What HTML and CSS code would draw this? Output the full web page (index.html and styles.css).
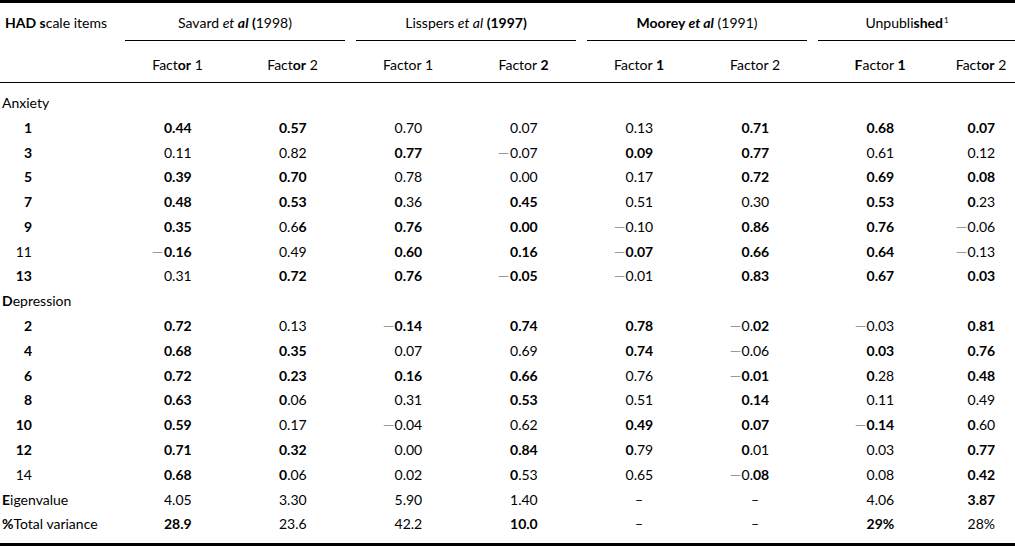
FILE: index.html
```html
<!DOCTYPE html>
<html lang="en">
<head>
<meta charset="utf-8">
<title>HAD scale factor loadings</title>
<link rel="stylesheet" href="styles.css">
</head>
<body>
<table class="had">
  <colgroup>
    <col class="c-lab">
    <col class="c-115"><col class="c-115">
    <col class="c-116"><col class="c-115">
    <col class="c-116"><col class="c-116">
    <col class="c-134"><col class="c-68">
  </colgroup>
  <thead>
    <tr class="hrow1">
      <th class="lab-head"><b>HAD s</b>cale items</th>
      <th colspan="2" class="grp g1"><div class="gl">Savard <i>et</i> <b><i>al</i> (</b>1998)</div></th>
      <th colspan="2" class="grp g2"><div class="gl">Lisspers <i>et al</i> <b>(1997)</b></div></th>
      <th colspan="2" class="grp g3"><div class="gl"><b>Moorey <i>et al</i></b> (1991)</div></th>
      <th colspan="2" class="grp g4"><div class="gl gl-last">Unpubli<b>shed</b><span class="sup">1</span></div></th>
    </tr>
    <tr class="hrow2">
      <th></th>
      <th>Fact<b>or</b> 1</th>
      <th>Fact<b>or</b> 2</th>
      <th>Factor 1</th>
      <th>Factor <b>2</b></th>
      <th>Factor <b>1</b></th>
      <th>Factor 2</th>
      <th><b>F</b>actor <b>1</b></th>
      <th>Fact<b>or</b> 2</th>
    </tr>
  </thead>
  <tbody>
    <tr class="first">
      <td class="sec">Anxiety</td><td colspan="8"></td>
    </tr>
    <tr>
      <td class="item"><span class="num"><b>1</b></span></td>
      <td><span class="v"><b>0.44</b></span></td>
      <td><span class="v"><b>0.57</b></span></td>
      <td><span class="v">0.70</span></td>
      <td><span class="v">0.07</span></td>
      <td><span class="v">0.13</span></td>
      <td><span class="v"><b>0.71</b></span></td>
      <td><span class="v"><b>0.68</b></span></td>
      <td><span class="v"><b>0.07</b></span></td>
    </tr>
    <tr>
      <td class="item"><span class="num"><b>3</b></span></td>
      <td><span class="v">0.11</span></td>
      <td><span class="v">0.82</span></td>
      <td><span class="v"><b>0.77</b></span></td>
      <td><span class="v"><span class="m">−</span>0.07</span></td>
      <td><span class="v"><b>0.09</b></span></td>
      <td><span class="v"><b>0.77</b></span></td>
      <td><span class="v">0.61</span></td>
      <td><span class="v">0.12</span></td>
    </tr>
    <tr>
      <td class="item"><span class="num"><b>5</b></span></td>
      <td><span class="v"><b>0.39</b></span></td>
      <td><span class="v"><b>0.70</b></span></td>
      <td><span class="v">0.78</span></td>
      <td><span class="v">0.00</span></td>
      <td><span class="v">0.17</span></td>
      <td><span class="v"><b>0.72</b></span></td>
      <td><span class="v"><b>0.69</b></span></td>
      <td><span class="v"><b>0.08</b></span></td>
    </tr>
    <tr>
      <td class="item"><span class="num"><b>7</b></span></td>
      <td><span class="v"><b>0.48</b></span></td>
      <td><span class="v"><b>0.53</b></span></td>
      <td><span class="v"><b>0</b>.36</span></td>
      <td><span class="v"><b>0.45</b></span></td>
      <td><span class="v">0.51</span></td>
      <td><span class="v">0.30</span></td>
      <td><span class="v"><b>0.53</b></span></td>
      <td><span class="v"><b>0</b>.23</span></td>
    </tr>
    <tr>
      <td class="item"><span class="num"><b>9</b></span></td>
      <td><span class="v"><b>0.35</b></span></td>
      <td><span class="v">0.6<b>6</b></span></td>
      <td><span class="v"><b>0.76</b></span></td>
      <td><span class="v"><b>0.00</b></span></td>
      <td><span class="v"><span class="m">−</span>0.10</span></td>
      <td><span class="v"><b>0.86</b></span></td>
      <td><span class="v"><b>0.76</b></span></td>
      <td><span class="v"><span class="m">−</span>0.06</span></td>
    </tr>
    <tr>
      <td class="item"><span class="num">11</span></td>
      <td><span class="v"><span class="m">−</span><b>0.16</b></span></td>
      <td><span class="v">0.49</span></td>
      <td><span class="v"><b>0.60</b></span></td>
      <td><span class="v"><b>0.16</b></span></td>
      <td><span class="v"><span class="m">−</span><b>0.07</b></span></td>
      <td><span class="v"><b>0.66</b></span></td>
      <td><span class="v"><b>0.64</b></span></td>
      <td><span class="v"><span class="m">−</span>0.13</span></td>
    </tr>
    <tr>
      <td class="item"><span class="num"><b>13</b></span></td>
      <td><span class="v">0.31</span></td>
      <td><span class="v"><b>0.72</b></span></td>
      <td><span class="v"><b>0.76</b></span></td>
      <td><span class="v"><span class="m">−</span><b>0.05</b></span></td>
      <td><span class="v"><span class="m">−</span>0.01</span></td>
      <td><span class="v"><b>0.83</b></span></td>
      <td><span class="v"><b>0.67</b></span></td>
      <td><span class="v"><b>0.03</b></span></td>
    </tr>
    <tr>
      <td class="sec"><b>D</b>epression</td><td colspan="8"></td>
    </tr>
    <tr>
      <td class="item"><span class="num"><b>2</b></span></td>
      <td><span class="v"><b>0.72</b></span></td>
      <td><span class="v">0.13</span></td>
      <td><span class="v"><span class="m">−</span><b>0.14</b></span></td>
      <td><span class="v"><b>0.74</b></span></td>
      <td><span class="v"><b>0.78</b></span></td>
      <td><span class="v"><span class="m">−</span>0.<b>02</b></span></td>
      <td><span class="v"><span class="m">−</span>0.03</span></td>
      <td><span class="v"><b>0.81</b></span></td>
    </tr>
    <tr>
      <td class="item"><span class="num"><b>4</b></span></td>
      <td><span class="v"><b>0.68</b></span></td>
      <td><span class="v"><b>0.35</b></span></td>
      <td><span class="v">0.07</span></td>
      <td><span class="v">0.69</span></td>
      <td><span class="v"><b>0.74</b></span></td>
      <td><span class="v"><span class="m">−</span>0.06</span></td>
      <td><span class="v"><b>0.03</b></span></td>
      <td><span class="v"><b>0.76</b></span></td>
    </tr>
    <tr>
      <td class="item"><span class="num"><b>6</b></span></td>
      <td><span class="v"><b>0.72</b></span></td>
      <td><span class="v"><b>0.23</b></span></td>
      <td><span class="v"><b>0.16</b></span></td>
      <td><span class="v"><b>0.66</b></span></td>
      <td><span class="v">0.76</span></td>
      <td><span class="v"><span class="m">−</span><b>0.01</b></span></td>
      <td><span class="v"><b>0</b>.28</span></td>
      <td><span class="v"><b>0.48</b></span></td>
    </tr>
    <tr>
      <td class="item"><span class="num"><b>8</b></span></td>
      <td><span class="v"><b>0.63</b></span></td>
      <td><span class="v"><b>0</b>.06</span></td>
      <td><span class="v">0.31</span></td>
      <td><span class="v"><b>0.53</b></span></td>
      <td><span class="v">0.51</span></td>
      <td><span class="v"><b>0.14</b></span></td>
      <td><span class="v">0.11</span></td>
      <td><span class="v">0.49</span></td>
    </tr>
    <tr>
      <td class="item"><span class="num"><b>10</b></span></td>
      <td><span class="v"><b>0.59</b></span></td>
      <td><span class="v">0.17</span></td>
      <td><span class="v"><span class="m">−</span>0.04</span></td>
      <td><span class="v">0.62</span></td>
      <td><span class="v"><b>0.49</b></span></td>
      <td><span class="v"><b>0.07</b></span></td>
      <td><span class="v"><span class="m">−</span><b>0.14</b></span></td>
      <td><span class="v"><b>0</b>.60</span></td>
    </tr>
    <tr>
      <td class="item"><span class="num"><b>12</b></span></td>
      <td><span class="v"><b>0.71</b></span></td>
      <td><span class="v"><b>0.32</b></span></td>
      <td><span class="v">0.00</span></td>
      <td><span class="v"><b>0.84</b></span></td>
      <td><span class="v"><b>0</b>.79</span></td>
      <td><span class="v"><b>0</b>.01</span></td>
      <td><span class="v">0.03</span></td>
      <td><span class="v"><b>0.77</b></span></td>
    </tr>
    <tr>
      <td class="item"><span class="num">14</span></td>
      <td><span class="v"><b>0.68</b></span></td>
      <td><span class="v"><b>0</b>.06</span></td>
      <td><span class="v">0.02</span></td>
      <td><span class="v"><b>0</b>.53</span></td>
      <td><span class="v">0.65</span></td>
      <td><span class="v"><span class="m">−</span>0.<b>08</b></span></td>
      <td><span class="v">0.08</span></td>
      <td><span class="v"><b>0.42</b></span></td>
    </tr>
    <tr>
      <td class="sec"><b>E</b>igenvalue</td>
      <td><span class="v">4.05</span></td>
      <td><span class="v">3.30</span></td>
      <td><span class="v">5.90</span></td>
      <td><span class="v">1.40</span></td>
      <td class="dash">–</td>
      <td class="dash">–</td>
      <td><span class="v">4.06</span></td>
      <td><span class="v"><b>3.87</b></span></td>
    </tr>
    <tr class="last">
      <td class="sec"><b>%</b>Total variance</td>
      <td><span class="v"><b>28.9</b></span></td>
      <td><span class="v">23.6</span></td>
      <td><span class="v">42.2</span></td>
      <td><span class="v"><b>10.0</b></span></td>
      <td class="dash">–</td>
      <td class="dash">–</td>
      <td><span class="v"><b>29%</b></span></td>
      <td><span class="v">28%</span></td>
    </tr>
  </tbody>
</table>
</body>
</html>
```
FILE: styles.css
```css
html, body {
  margin: 0;
  padding: 0;
  background: #fff;
}
body {
  width: 1015px;
  height: 546px;
  overflow: hidden;
  font-family: Lato, "Open Sans", "Liberation Sans", sans-serif;
  font-size: 14px;
  color: #000;
}
.had {
  width: 1015px;
  table-layout: fixed;
  border-collapse: separate;
  border-spacing: 0;
  border-top: 3px solid #000;
  border-bottom: 3px solid #000;
}
.c-lab { width: 120px; }
.c-115 { width: 115px; }
.c-116 { width: 116px; }
.c-134 { width: 134px; }
.c-68 { width: 68px; }

.had th, .had td {
  padding: 0;
  line-height: 17px;
  font-weight: 400;
  white-space: nowrap;
}
.had b { font-weight: 700; }

/* header row 1 */
.had th.lab-head {
  text-align: left;
  vertical-align: top;
  padding: 11px 0 0 5px;
}
.grp { vertical-align: top; }
.gl {
  padding: 11px 0 9px;
  border-bottom: 1px solid #000;
  text-align: center;
}
.had th.g1 { padding: 0 5px; }
.had th.g2 { padding: 0 5px 0 6px; }
.had th.g3 { padding: 0 6px; }
.had th.g4 { padding: 0 0 0 5px; }
.gl-last { padding-right: 19px; }
.sup {
  font-size: 8px;
  vertical-align: 5px;
  line-height: 0;
  margin-left: 1px;
}

/* header row 2 */
.had .hrow2 th {
  padding: 15px 0 9px;
  border-bottom: 1px solid #000;
  text-align: center;
}

/* body */
.had tbody td {
  padding: 3.9px 0;
  text-align: center;
}
.had tbody tr.first td { padding-top: 11px; }
.had tbody tr.last td { padding-bottom: 10.4px; }
.had tbody td.sec {
  text-align: left;
  padding-left: 2px;
}
.had tbody td.item { text-align: left; }
.num {
  display: inline-block;
  width: 32px;
  text-align: right;
}
.v {
  display: inline-block;
  width: 27px;
  text-align: left;
}
.m {
  display: inline-block;
  width: 13px;
  margin-left: -13px;
  color: #9a9a9a;
  font-weight: 400;
  text-align: left;
  transform: scaleX(1.6);
  transform-origin: 0 50%;
}
.dash { font-weight: 700; }
```
